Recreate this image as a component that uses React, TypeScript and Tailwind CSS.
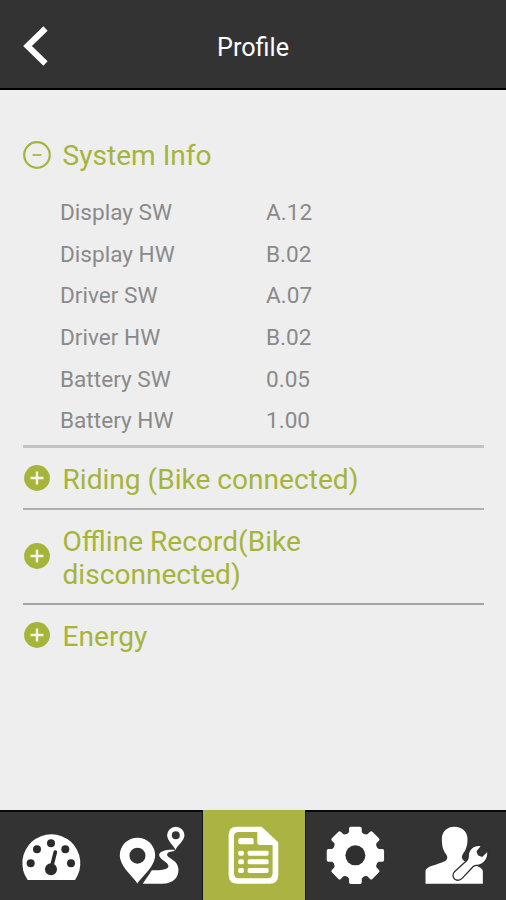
import { useState, type ReactNode } from 'react'

type Info = { label: string; value: string }

const systemInfo: Info[] = [
  { label: 'Display SW', value: 'A.12' },
  { label: 'Display HW', value: 'B.02' },
  { label: 'Driver SW', value: 'A.07' },
  { label: 'Driver HW', value: 'B.02' },
  { label: 'Battery SW', value: '0.05' },
  { label: 'Battery HW', value: '1.00' },
]

function MinusIcon() {
  return (
    <svg viewBox="0 0 28 28" className="mb-px w-7 h-7 shrink-0" fill="none" stroke="#a7b43a" strokeWidth="2.2">
      <circle cx="14" cy="14" r="12.8" />
      <path d="M9.5 14h9" strokeWidth="1.7" />
    </svg>
  )
}

function PlusIcon() {
  return (
    <svg viewBox="0 0 28 28" className="mb-px w-7 h-7 shrink-0">
      <circle cx="14" cy="14" r="12.9" fill="#a7b43a" />
      <path d="M7.5 14h13M14 7.5v13" stroke="#f4f5e8" strokeWidth="2.4" />
    </svg>
  )
}

function GaugeIcon() {
  return (
    <svg viewBox="0 30 303.6 270" className="w-full h-full">
      <path d="M83 240A87 87 0 1 1 225 240Z" fill="#fff" />
      <g fill="#2b2b2b">
        <circle cx="92" cy="190" r="12" />
        <circle cx="111" cy="148" r="12" />
        <circle cx="153" cy="130" r="12" />
        <circle cx="196" cy="148" r="12" />
        <circle cx="213" cy="190" r="12" />
        <circle cx="153" cy="208" r="18" />
      </g>
      <path d="M155 200L166 156" stroke="#2b2b2b" strokeWidth="11" strokeLinecap="round" />
    </svg>
  )
}

function RouteIcon() {
  return (
    <svg viewBox="3.6 30 303.6 270" className="w-full h-full" fill="#fff">
      <path
        fillRule="evenodd"
        d="M113 251C105 235 60 201 60 166A53 53 0 0 1 166 166C166 201 121 235 113 251ZM113 143a24 24 0 1 0 0 48a24 24 0 1 0 0-48Z"
      />
      <path
        fillRule="evenodd"
        d="M227 150C223 138 202 123 202 106A26 26 0 0 1 254 106C254 123 231 138 227 150ZM228 94a12 12 0 1 0 0 24a12 12 0 1 0 0-24Z"
      />
      <path d="M224 149C196 148 178 154 178 165C178 178 206 187 206 198C206 209 184 211 156 211C148 224 139 236 129 251H186C222 251 236 231 236 209C236 179 202 175 202 164C202 157 212 154 224 153Z" />
    </svg>
  )
}

function RecordIcon() {
  return (
    <svg viewBox="10.2 30 303.6 270" className="w-full h-full" fill="#fff">
      <path
        fillRule="evenodd"
        d="M112 80H186L236 127V224Q236 251 209 251H114Q87 251 87 224V105Q87 80 112 80ZM117 96Q103 96 103 110V220Q103 235 118 235H203Q219 235 219 220V135H181Q173 135 173 127V96Z"
      />
      <path d="M122 114H157Q162 114 162 119V133H122Q116 133 116 127V120Q116 114 122 114Z" />
      <rect x="116" y="152" width="17" height="15" rx="5" />
      <rect x="116" y="178" width="17" height="15" rx="5" />
      <rect x="116" y="204" width="17" height="15" rx="5" />
      <rect x="144" y="152" width="63" height="15" rx="5" />
      <rect x="144" y="178" width="63" height="15" rx="5" />
      <rect x="144" y="204" width="63" height="15" rx="5" />
    </svg>
  )
}

function GearIcon() {
  return (
    <svg viewBox="10.8 30 303.6 270" className="w-full h-full">
      <g transform="translate(165 166)" fill="#fff">
        <circle r="69" />
        {[0, 45, 90, 135, 180, 225, 270, 315].map((angle) => (
          <path
            key={angle}
            d="M-27 -60L-19 -70V-81Q-19 -86 -14 -86H14Q19 -86 19 -81V-70L27 -60Z"
            transform={`rotate(${angle})`}
          />
        ))}
        <circle r="30" fill="#2f2f2f" />
      </g>
    </svg>
  )
}

function ServiceIcon() {
  return (
    <svg viewBox="14.4 30 303.6 270" className="w-full h-full" fill="#fff">
      <path d="M76 251V214C76 197 116 194 136 182C144 176 142 169 137 162C129 150 125 139 125 117C125 94 141 80 163 80C186 80 202 95 202 117C202 139 196 151 188 162C183 170 184 177 192 183C211 193 248 199 248 214V251Z" />
      {/* wrench sits over the shoulder with a dark outline */}
      <path
        d="M241 139C224 135 206 148 206 168C206 174 205 179 201 183L165 216C158 223 160 231 165 236C171 240 179 239 185 233L217 199C221 195 226 194 232 194C251 192 263 174 261 156L246 171L233 166L229 154Z"
        stroke="#2f2f2f"
        strokeWidth="8"
        strokeLinejoin="round"
        paintOrder="stroke"
      />
    </svg>
  )
}

type SectionProps = {
  title: ReactNode
  className: string
  open: boolean
  onToggle: () => void
}

function SectionHeader({ title, className, open, onToggle }: SectionProps) {
  return (
    <button
      onClick={onToggle}
      className={`flex w-full items-center gap-[11.5px] text-left text-[28.1px] leading-[33px] text-[#a7b43a] ${className}`}
    >
      {open ? <MinusIcon /> : <PlusIcon />}
      <span className={open ? '' : 'pt-[2px]'}>{title}</span>
    </button>
  )
}

const tabs = [
  { id: 'gauge', icon: <GaugeIcon /> },
  { id: 'route', icon: <RouteIcon /> },
  { id: 'record', icon: <RecordIcon /> },
  { id: 'settings', icon: <GearIcon /> },
  { id: 'service', icon: <ServiceIcon /> },
]

export default function App() {
  const [infoOpen, setInfoOpen] = useState(true)
  const [tab, setTab] = useState('record')

  return (
    <div className="flex h-[900px] w-[506px] flex-col overflow-hidden bg-[#eeeeee] font-[Roboto,sans-serif]">
      {/* Header */}
      <header className="grid h-[90px] shrink-0 grid-cols-[1fr_auto_1fr] items-center border-b-2 border-black bg-[#333333]">
        <button className="pt-[3px] pl-[23px]">
          <svg viewBox="0 0 26 42" className="w-[26px] h-[42px]" fill="none" stroke="#fff" strokeWidth="6">
            <path d="M22.5 3.5L4.5 21L22.5 38.5" />
          </svg>
        </button>
        <h1 className="pt-[7px] text-[25.2px] text-white">Profile</h1>
      </header>

      <main className="flex-1 pt-[47.5px] pr-[22px] pl-[23px]">
        <SectionHeader title="System Info" className="h-[35px]" open={infoOpen} onToggle={() => setInfoOpen(!infoOpen)} />
        {infoOpen && (
          <dl className="pt-[19.5px] pl-[37px] text-[22.6px] text-[#8a8a8a]">
            {systemInfo.map((row) => (
              <div key={row.label} className="grid h-[41.7px] grid-cols-[206px_1fr] items-center">
                <dt>{row.label}</dt>
                <dd>{row.value}</dd>
              </div>
            ))}
          </dl>
        )}
        <div className="mt-[3px] border-t-[3px] border-[#c3c3c3]" />
        <SectionHeader title="Riding (Bike connected)" className="h-[60px]" open={false} onToggle={() => {}} />
        <div className="border-t-2 border-[#b0b0b0]" />
        <SectionHeader
          title={<>Offline Record(Bike<br />disconnected)</>}
          className="h-[93px]"
          open={false}
          onToggle={() => {}}
        />
        <div className="border-t-2 border-[#a5a5a5]" />
        <SectionHeader title="Energy" className="h-[61px]" open={false} onToggle={() => {}} />
      </main>

      {/* Bottom tabs */}
      <nav className="grid h-[90px] shrink-0 grid-cols-5 bg-[#333333]">
        {tabs.map((t) => (
          <button
            key={t.id}
            onClick={() => setTab(t.id)}
            className={
              t.id === tab
                ? 'h-[90px] translate-x-px bg-[#abb442] shadow-[-1px_0_0_#15151c,1px_0_0_#15151c]'
                : 'h-[90px] shadow-[inset_0_2px_0_#080808]'
            }
          >
            {t.icon}
          </button>
        ))}
      </nav>
    </div>
  )
}
